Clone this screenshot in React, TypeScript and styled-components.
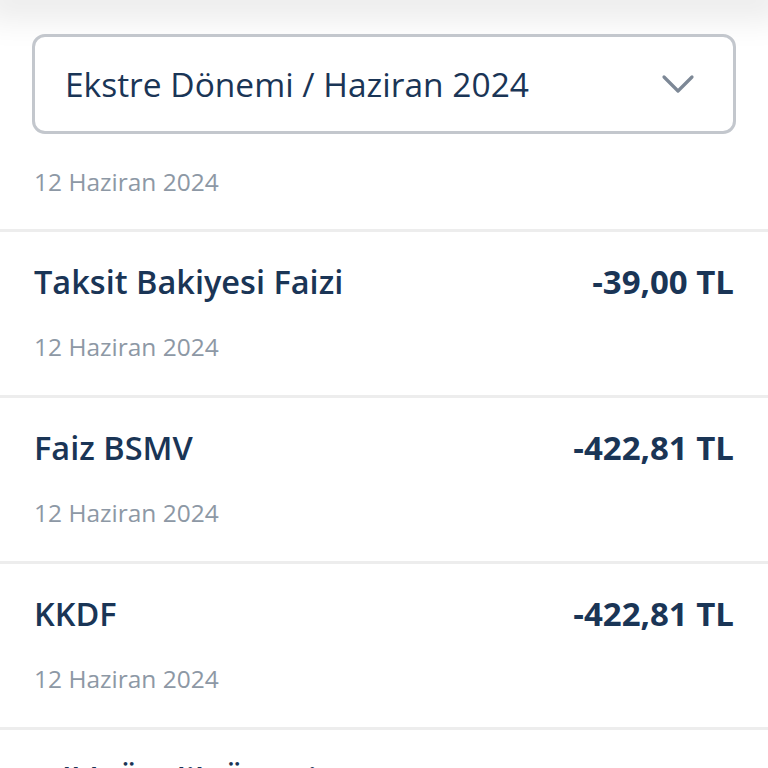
import React from 'react'
import styled, { createGlobalStyle } from 'styled-components'

const GlobalStyle = createGlobalStyle`
  *, *::before, *::after {
    box-sizing: border-box;
  }
  html, body {
    margin: 0;
    padding: 0;
    background: #ffffff;
    font-family: "Open Sans", "Noto Sans", sans-serif;
    overflow: hidden;
  }
`

type Item = {
  title: string
  amount: string
  date: string
}

const items: Item[] = [
  { title: 'Taksit Bakiyesi Faizi', amount: '-39,00 TL', date: '12 Haziran 2024' },
  { title: 'Faiz BSMV', amount: '-422,81 TL', date: '12 Haziran 2024' },
  { title: 'KKDF', amount: '-422,81 TL', date: '12 Haziran 2024' },
  { title: 'Yıllık Üyelik Ücreti', amount: '-699,50 TL', date: '12 Haziran 2024' },
]

const ChevronDown = () => (
  <svg width="34" height="22" viewBox="0 0 34 22" fill="none">
    <path d="M3 4 L17 18 L31 4" stroke="#7d8896" strokeWidth="3.2" strokeLinecap="round" strokeLinejoin="round" />
  </svg>
)

export default function App() {
  return (
    <>
      <GlobalStyle />
      <Page>
        <HeaderShadow />
        <Content>
          <Select>
            <SelectLabel>Ekstre Dönemi / Haziran 2024</SelectLabel>
            <ChevronDown />
          </Select>
          <GroupDate>12 Haziran 2024</GroupDate>
        </Content>
        <List>
          {items.map((item, i) => (
            <Row key={i}>
              <RowTop>
                <Title>{item.title}</Title>
                <Amount>{item.amount}</Amount>
              </RowTop>
              <RowDate>{item.date}</RowDate>
            </Row>
          ))}
        </List>
      </Page>
    </>
  )
}

const Page = styled.div`
  width: 768px;
  height: 768px;
  overflow: hidden;
  background: #ffffff;
  display: flex;
  flex-direction: column;
`
const HeaderShadow = styled.div`
  height: 0;
  flex-shrink: 0;
  box-shadow: 0 0 34px 18px rgba(0, 0, 0, 0.09);
`
const Content = styled.div`
  padding: 34px 32px 0 32px;
  display: flex;
  flex-direction: column;
  flex-shrink: 0;
`
const Select = styled.div`
  height: 100px;
  border: 3px solid #c3c7cd;
  border-radius: 13px;
  display: flex;
  align-items: center;
  justify-content: space-between;
  padding: 0 38px 0 30px;
  background: #ffffff;
`
const SelectLabel = styled.span`
  font-size: 33.5px;
  font-weight: 500;
  color: #1a3556;
`
const GroupDate = styled.div`
  font-size: 24.5px;
  color: #8d98a5;
  padding: 32px 0 0 2px;
  height: 95px;
  line-height: 32px;
`
const List = styled.div`
  display: flex;
  flex-direction: column;
`
const Row = styled.div`
  border-top: 3px solid #ededed;
  padding: 29px 34px 0 34px;
  height: 166px;
  flex-shrink: 0;
  display: flex;
  flex-direction: column;
`
const RowTop = styled.div`
  display: flex;
  justify-content: space-between;
  align-items: center;
  height: 40px;
`
const Title = styled.span`
  font-size: 32.5px;
  font-weight: 600;
  color: #1a3556;
`
const Amount = styled.span`
  font-size: 33px;
  font-weight: 700;
  color: #1a3556;
`
const RowDate = styled.div`
  margin-top: 30px;
  font-size: 24.5px;
  color: #8d98a5;
  line-height: 32px;
`
